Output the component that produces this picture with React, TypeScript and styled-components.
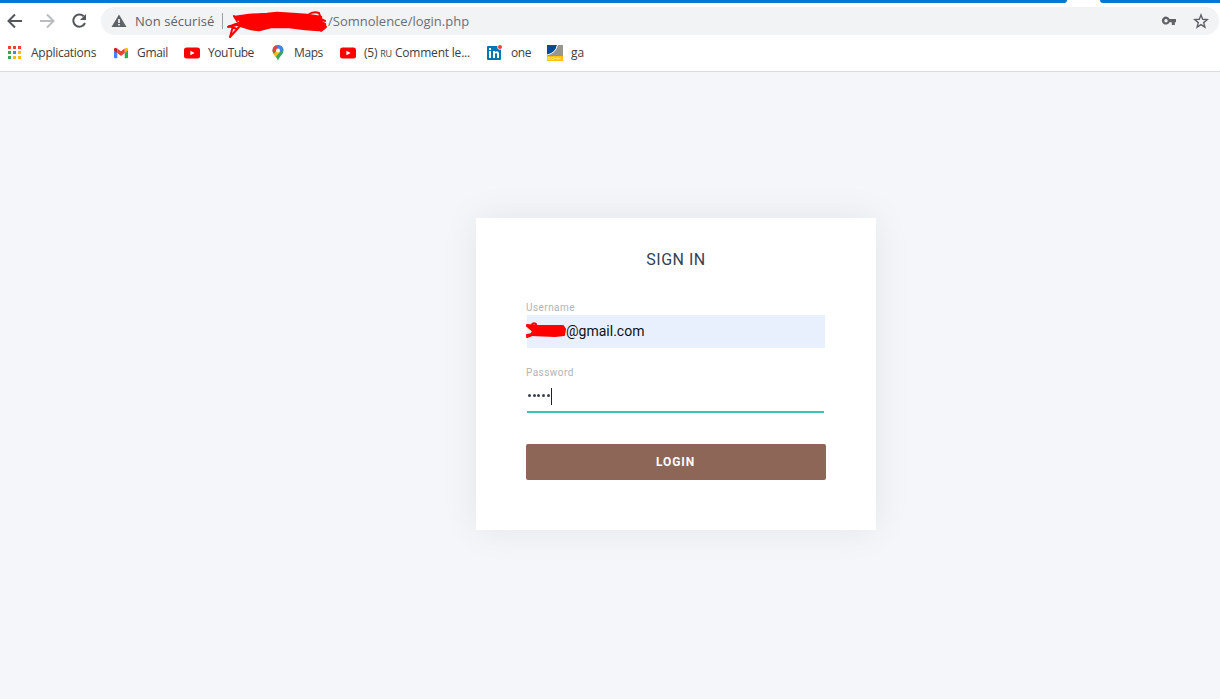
import React from "react";
import styled, { createGlobalStyle } from "styled-components";

const GlobalStyle = createGlobalStyle`
  * { box-sizing: border-box; }
  body { margin: 0; background: #f4f6fa; overflow: hidden; }
`;

const Window = styled.div`
  height: 699px;
  display: flex;
  flex-direction: column;
  font-family: "Open Sans", "Noto Sans", sans-serif;
`;

const BrowserChrome = styled.header`
  height: 72px;
  background: #fff;
  border-bottom: 1px solid #dadce0;
`;

const TabStrip = styled.div`
  height: 3px;
  display: flex;
  justify-content: space-between;
`;

const StripPiece = styled.div<{ $width: number; $side: "left" | "right" }>`
  width: ${(p) => p.$width}px;
  background: #0078d7;
  border-radius: ${(p) => (p.$side === "left" ? "0 0 5px 0" : "0 0 0 5px")};
`;

const Toolbar = styled.div`
  height: 36px;
  display: flex;
  align-items: center;
  padding: 0 1px 0 5px;
`;

const NavButtons = styled.nav`
  width: 96px;
  display: flex;
  gap: 12px;
  svg { display: block; }
`;

const AddressBar = styled.div`
  flex: 1;
  height: 28px;
  border-radius: 14px;
  background: #f1f3f4;
  display: flex;
  align-items: center;
  padding: 0 10px;
  color: #5f6368;
  font-size: 13px;
  svg { display: block; flex: none; }
`;

const Label = styled.span<{ $width: number; $spacing?: number }>`
  width: ${(p) => p.$width}px;
  letter-spacing: ${(p) => p.$spacing ?? 0}px;
  white-space: nowrap;
  flex: none;
`;

const SecurityLabel = styled(Label)`
  margin-left: 8px;
`;

const Url = styled(Label)`
  color: #6b6f73;
`;

const Divider = styled.span`
  width: 1px;
  height: 16px;
  margin: 0 4px 0 7px;
  background: #9aa0a6;
`;

const AddressScribble = styled.svg`
  margin: 4px -1px 0 0;
`;

const AddressActions = styled.div`
  margin-left: auto;
  display: flex;
  align-items: center;
  gap: 16px;
`;

const Bookmarks = styled.div`
  height: 28px;
  display: flex;
  align-items: center;
  gap: 16px;
  padding-left: 7px;
`;

const BookmarkItem = styled.a`
  display: flex;
  align-items: center;
  gap: 8px;
  color: #3c4043;
  font-size: 12px;
  line-height: 16px;
  svg { display: block; flex: none; }
`;

const SmallCaps = styled.small`
  font-size: 9px;
`;

const Page = styled.main`
  flex: 1;
  padding: 146px 0 0 476px;
  background: #f4f6fa;
`;

const Card = styled.form`
  width: 400px;
  height: 312px;
  padding: 30px 50px 0;
  background: #fff;
  box-shadow: 0 0 36px rgba(0, 0, 0, 0.07);
  font-family: Roboto, sans-serif;
  display: flex;
  flex-direction: column;
`;

const Title = styled.h1`
  margin: 0 0 29px;
  height: 24px;
  font-size: 16px;
  font-weight: 400;
  line-height: 24px;
  letter-spacing: 0.5px;
  text-align: center;
  color: #364150;
`;

const FieldLabel = styled.label`
  height: 14px;
  font-size: 10px;
  line-height: 13px;
  letter-spacing: 0.45px;
  color: #b0b3b7;
`;

const Field = styled.div<{ $focused?: boolean }>`
  height: 33px;
  margin: ${(p) => (p.$focused ? "0 2px 19px 1px" : "0 1px 18px")};
  padding-bottom: ${(p) => (p.$focused ? 0 : 2)}px;
  display: flex;
  align-items: center;
  font-size: 14px;
  color: #111;
  background: ${(p) => (p.$focused ? "#fff" : "#e8f0fe")};
  border-bottom: ${(p) => (p.$focused ? "2px solid #36c6b3" : "0")};
`;

const EmailScribble = styled.svg`
  margin: -2px -1px 0 -2px;
  flex: none;
`;

const Dots = styled.span`
  display: flex;
  gap: 1.7px;
  padding-left: 1px;
`;

const Dot = styled.i`
  width: 3px;
  height: 3px;
  border-radius: 50%;
  background: #364150;
`;

const Caret = styled.span`
  width: 1px;
  height: 17px;
  margin: 2px 0 0 1px;
  background: #222;
`;

const LoginButton = styled.button`
  height: 36px;
  margin: 12px 0 0;
  padding: 0 1px 0 0;
  border: 0;
  border-radius: 2px;
  background: #8d6658;
  color: #fff;
  font: 700 12px/36px Roboto, sans-serif;
  letter-spacing: 0.9px;
`;

const YouTubeIcon = () => (
  <svg width="16" height="16" viewBox="0 0 16 16">
    <rect y="2.5" width="16" height="11" rx="2.5" fill="#f00" />
    <path d="M6.4 5.7 10.6 8l-4.2 2.3z" fill="#fff" />
  </svg>
);

const AppsIcon = () => (
  <svg width="16" height="16" viewBox="0 0 16 16">
    {["#ea4335", "#ea4335", "#ea4335", "#34a853", "#4285f4", "#fbbc04", "#34a853", "#fbbc04", "#fbbc04"].map((c, i) => (
      <rect key={i} x={1 + (i % 3) * 5} y={1 + Math.floor(i / 3) * 5} width="3" height="3" fill={c} />
    ))}
  </svg>
);

const GmailIcon = () => (
  <svg width="16" height="16" viewBox="0 0 16 16">
    <path d="M1 4v8.2q0 1 1 1h2.3V6.5z" fill="#4285f4" />
    <path d="M15 4v8.2q0 1-1 1h-2.3V6.5z" fill="#34a853" />
    <path d="M11.7 3.5 13 2.9q2-.4 2 1.5v1.2l-3.3 2.5z" fill="#fbbc04" />
    <path d="M4.3 3.5 3 2.9Q1 2.500 1 4.400v1.200l3.300 2.500z" fill="#c5221f" />
    <path d="M4.300 3.500 8 6.300l3.700-2.800v4.600L8 10.900 4.300 8.100z" fill="#ea4335" />
  </svg>
);

const MapsIcon = () => (
  <svg width="16" height="16" viewBox="0 0 16 16">
    <defs>
      <clipPath id="pin">
        <path d="M8 0a5.500 5.500 0 0 0-5.500 5.500C2.500 10 7 11 8 16c1-5 5.500-6 5.500-10.500A5.500 5.500 0 0 0 8 0z" />
      </clipPath>
    </defs>
    <g clipPath="url(#pin)">
      <rect width="16" height="16" fill="#34a853" />
      <path d="M5 0h11v3L9 8 5 5z" fill="#4285f4" />
      <path d="M0 0h5.500L8 3 4 8 0 5z" fill="#ea4335" />
      <path d="M2 11 8 4l2 3-6 7z" fill="#fbbc04" />
    </g>
    <circle cx="8" cy="5.500" r="2" fill="#fff" />
  </svg>
);

const LinkedInIcon = () => (
  <svg width="16" height="16" viewBox="0 0 16 16">
    <rect y="1" width="14" height="14" rx="1" fill="#0077b5" />
    <path d="M2 6h2v7H2zM2 3h2v2H2zM6 6h2v1q3-2 4 1v5h-2V9q-1-2-2 0v4H6z" fill="#fff" />
    <circle cx="13" cy="2" r="2.700" fill="#fff" />
    <circle cx="13" cy="2" r="2" fill="#e94235" />
  </svg>
);

const BonnIcon = () => (
  <svg width="16" height="16" viewBox="0 0 16 16">
    <rect width="16" height="11" fill="#96968c" />
    <path d="M0 0h10Q8 8 0 10z" fill="#004b9b" />
    <path d="M10.500 0Q9 8 0 10" fill="none" stroke="#fff" />
    <rect y="11" width="16" height="5" fill="#fcc200" />
    <path d="M1 14.500v-2h2v2zM4.500 14.500v-2h2v2zM8 14.500v-2l2 2v-2M11 14.500v-2l2 2v-2" fill="none" stroke="#ffe9a0" strokeWidth=".8" />
  </svg>
);

const bookmarks = [
  { icon: <AppsIcon />, text: "Applications", width: 66, spacing: -0.27 },
  { icon: <GmailIcon />, text: "Gmail", width: 31, spacing: -0.3 },
  { icon: <YouTubeIcon />, text: "YouTube", width: 46, spacing: -0.5 },
  { icon: <MapsIcon />, text: "Maps", width: 30, spacing: -0.4 },
  { icon: <YouTubeIcon />, text: <>(5) <SmallCaps>RU</SmallCaps> Comment le...</>, width: 107, spacing: -0.2 },
  { icon: <LinkedInIcon />, text: "one", width: 20, spacing: -0.4 },
  { icon: <BonnIcon />, text: "ga", width: 14, spacing: 0 },
];

export default function App() {
  return (
    <Window>
      <GlobalStyle />
      <BrowserChrome>
        <TabStrip>
          <StripPiece $width={1067} $side="left" />
          <StripPiece $width={120} $side="right" />
        </TabStrip>
        <Toolbar>
          <NavButtons>
            <svg width="20" height="20" viewBox="0 0 20 20" fill="none" stroke="#54585d" strokeWidth="2"><path d="M17 10H4M10 3.500 3.500 10l6.500 6.500" /></svg>
            <svg width="20" height="20" viewBox="0 0 20 20" fill="none" stroke="#babcbe" strokeWidth="2"><path d="M3 10h13M10 3.500l6.500 6.500-6.500 6.500" /></svg>
            <svg width="20" height="20" viewBox="0 0 20 20"><path d="M14.700 5.300A6.100 6.100 0 1 0 16 12" fill="none" stroke="#54585d" strokeWidth="2" /><path d="M17 3v6h-6z" fill="#54585d" /></svg>
          </NavButtons>
          <AddressBar>
            <svg width="16" height="16" viewBox="0 0 16 16"><path d="M8 1.500 15.500 14H.5z" fill="#5f6368" /><path d="M7.200 6h1.600v4H7.200zM7.200 11h1.600v1.500H7.200z" fill="#fff" /></svg>
            <SecurityLabel $width={80} $spacing={0.05}>Non sécurisé</SecurityLabel>
            <Divider />
            <AddressScribble width="102" height="32" viewBox="0 0 102 32" stroke="#f00" strokeLinecap="round" strokeLinejoin="round">
              <path d="M8 10 22 8 40 7 50 6 66 7 80 8 94 10 92 14 98 17 97 21 92 23 78 22 62 20 44 20 32 23 24 22 11 18 14 14z" fill="#f00" strokeWidth="2.500" />
              <path d="M81 8Q86 4 92 6L94 12 98 14M1 20 14 15M3 30 6 19 13 17M3 30 12 20M2 19 10 22M7 9 10 14M92 12 99 20 94 24" fill="none" strokeWidth="2" />
            </AddressScribble>
            <Url $width={141}>/Somnolence/login.php</Url>
            <AddressActions>
              <svg width="16" height="16" viewBox="0 0 16 16"><path fillRule="evenodd" d="M8.500 6H15v3.200h-1.200V12h-3V9.200H8.500A4 4 0 1 1 8.500 6zM5 6a1.700 1.700 0 1 0 0 3.400A1.700 1.700 0 0 0 5 6z" fill="#5f6368" /></svg>
              <svg width="16" height="16" viewBox="0 0 16 16"><path d="m8 2 1.700 4.300 4.600.3-3.600 3 1.200 4.500L8 11.600l-3.900 2.500 1.200-4.500-3.600-3 4.600-.3z" fill="none" stroke="#5f6368" strokeWidth="1.400" /></svg>
            </AddressActions>
          </AddressBar>
        </Toolbar>
        <Bookmarks>
          {bookmarks.map((b, i) => (
            <BookmarkItem key={i}>
              {b.icon}
              <Label $width={b.width} $spacing={b.spacing}>{b.text}</Label>
            </BookmarkItem>
          ))}
        </Bookmarks>
      </BrowserChrome>
      <Page>
        <Card>
          <Title>SIGN IN</Title>
          <FieldLabel>Username</FieldLabel>
          <Field>
            <EmailScribble width="42" height="18" viewBox="0 0 42 18" stroke="#f00" strokeLinecap="round" strokeLinejoin="round">
              <path d="M4 6 12 5 38 5 40 8 39 14 30 15 6 14 8 10z" fill="#f00" strokeWidth="2" />
              <path d="M2 4 12 5M6 5Q8 1 11 3L10 7M2 14 8 13M2 16 7 14M2 5 7 9" fill="none" strokeWidth="2" />
            </EmailScribble>
            @gmail.com
          </Field>
          <FieldLabel>Password</FieldLabel>
          <Field $focused>
            <Dots>{[0, 1, 2, 3, 4].map((n) => <Dot key={n} />)}</Dots>
            <Caret />
          </Field>
          <LoginButton type="button">LOGIN</LoginButton>
        </Card>
      </Page>
    </Window>
  );
}
